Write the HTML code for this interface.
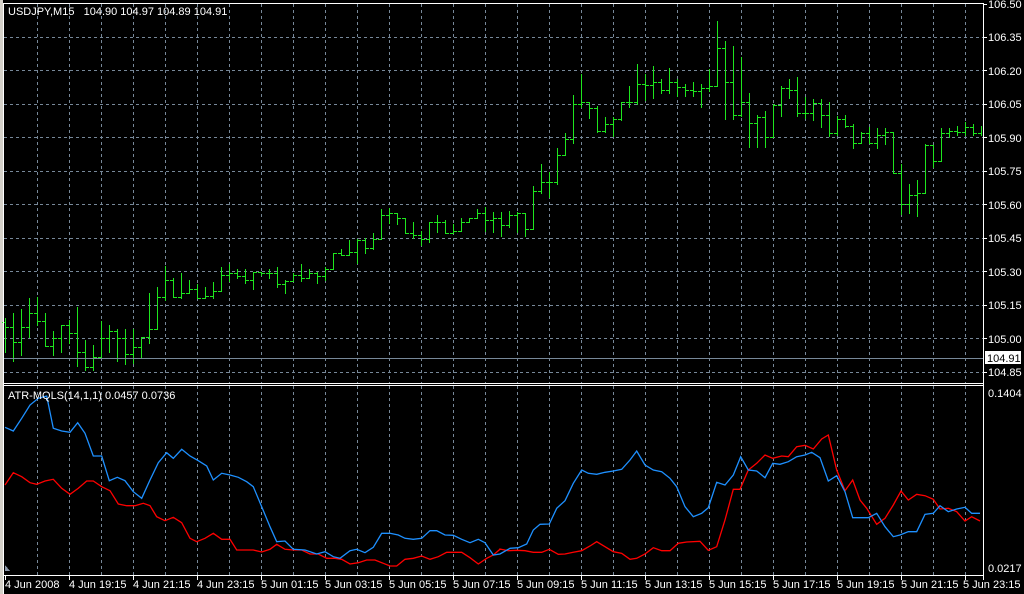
<!DOCTYPE html>
<html><head><meta charset="utf-8"><style>
html,body{margin:0;padding:0;background:#000;width:1024px;height:594px;overflow:hidden}
svg{display:block}
text{font-family:"Liberation Sans",sans-serif;font-size:11px;fill:#fff}
</style></head><body>
<svg id="c" width="1024" height="594" xmlns="http://www.w3.org/2000/svg" shape-rendering="crispEdges">
<rect x="0" y="0" width="1024" height="594" fill="#000"/>
<rect x="0" y="0" width="3" height="594" fill="#d4d0c8"/>
<g id="grid"></g>
<g id="bars"></g>
<line x1="4" y1="358.5" x2="983" y2="358.5" stroke="#778899"/>
<g id="lines" shape-rendering="auto"></g>
<line x1="3.5" y1="3" x2="3.5" y2="594" stroke="#fff"/>
<line x1="3" y1="3.5" x2="984" y2="3.5" stroke="#fff"/>
<line x1="983.5" y1="3" x2="983.5" y2="580" stroke="#fff"/>
<line x1="3" y1="383.5" x2="984" y2="383.5" stroke="#fff"/>
<line x1="3" y1="385.5" x2="984" y2="385.5" stroke="#fff"/>
<line x1="3" y1="575.5" x2="984" y2="575.5" stroke="#fff"/>
<polygon points="5,571 5,565 10,571" fill="#8a96a8"/>
<g id="ticks"></g>
<text x="8" y="15">USDJPY,M15&#160;&#160; 104.90&#160;104.97&#160;104.89&#160;104.91</text>
<text x="8" y="399">ATR-MQLS(14,1,1) 0.0457 0.0736</text>
<text x="988" y="8">106.50</text>
<text x="988" y="41">106.35</text>
<text x="988" y="75">106.20</text>
<text x="988" y="108">106.05</text>
<text x="988" y="142">105.90</text>
<text x="988" y="175">105.75</text>
<text x="988" y="209">105.60</text>
<text x="988" y="242">105.45</text>
<text x="988" y="276">105.30</text>
<text x="988" y="309">105.15</text>
<text x="988" y="343">105.00</text>
<text x="988" y="376">104.85</text>
<rect x="985" y="351" width="36" height="13" fill="#fff"/>
<text x="987" y="362" style="fill:#000">104.91</text>
<text x="988" y="397">0.1404</text>
<text x="988" y="572">0.0217</text>
<text x="5" y="588">4 Jun 2008</text>
<text x="69" y="588">4 Jun 19:15</text>
<text x="133" y="588">4 Jun 21:15</text>
<text x="197" y="588">4 Jun 23:15</text>
<text x="261" y="588">5 Jun 01:15</text>
<text x="325" y="588">5 Jun 03:15</text>
<text x="389" y="588">5 Jun 05:15</text>
<text x="453" y="588">5 Jun 07:15</text>
<text x="517" y="588">5 Jun 09:15</text>
<text x="581" y="588">5 Jun 11:15</text>
<text x="645" y="588">5 Jun 13:15</text>
<text x="709" y="588">5 Jun 15:15</text>
<text x="773" y="588">5 Jun 17:15</text>
<text x="837" y="588">5 Jun 19:15</text>
<text x="901" y="588">5 Jun 21:15</text>
<text x="963" y="588">5 Jun 23:15</text>
</svg>
<script>
var NS="http://www.w3.org/2000/svg";
function el(g,t,a){var e=document.createElementNS(NS,t);for(var k in a)e.setAttribute(k,a[k]);document.getElementById(g).appendChild(e);return e;}
for(var x=37;x<983;x+=32){el('grid','line',{x1:x+.5,y1:4,x2:x+.5,y2:383,stroke:'#778899','stroke-dasharray':'3,3'});
 el('grid','line',{x1:x+.5,y1:386,x2:x+.5,y2:575,stroke:'#778899','stroke-dasharray':'3,3'});}
var ys=[36.5,70,103.5,137,170.5,204,237.5,271,304.5,338,371.5];
ys.forEach(function(y){var yy=Math.round(y)+.5;el('grid','line',{x1:4,y1:yy,x2:983,y2:yy,stroke:'#778899','stroke-dasharray':'3,3'});
 el('ticks','line',{x1:983,y1:yy,x2:987,y2:yy,stroke:'#fff'});});
el('ticks','line',{x1:983,y1:4.5,x2:987,y2:4.5,stroke:'#fff'});
for(var x=5;x<983;x+=64){el('ticks','line',{x1:x+.5,y1:575,x2:x+.5,y2:580,stroke:'#fff'});}
var B=[[318,352,327],[313,361,342],[309,355,327],[298,337,313],[297,325,321],[313,346,346],[331,355,338],[325,352,325],[320,343,333],[307,366,352],[340,370,367],[345,370,357],[321,354,338],[325,352,331],[329,361,338],[329,364,354],[329,363,347],[338,357,337],[293,343,329],[287,317,297],[266,300,280],[278,297,297],[273,298,293],[280,293,289],[284,298,298],[287,298,296],[282,298,291],[267,291,275],[264,281,273],[269,278,276],[269,283,280],[272,289,272],[272,275,273],[269,278,273],[267,287,284],[280,293,281],[273,281,275],[264,281,278],[269,275,273],[272,283,276],[267,280,269],[253,267,253],[249,255,255],[240,255,252],[239,263,240],[238,253,248],[233,249,239],[209,239,215],[208,223,213],[214,224,218],[218,233,233],[222,238,235],[231,245,239],[222,242,222],[215,232,222],[220,233,233],[224,233,231],[218,226,222],[218,222,218],[209,216,213],[207,231,220],[212,232,218],[212,236,225],[211,227,215],[212,232,213],[213,236,229],[186,227,191],[164,193,182],[172,197,182],[148,184,155],[133,155,139],[95,143,104],[74,107,102],[104,118,108],[106,132,131],[117,132,124],[117,136,119],[102,120,102],[86,107,102],[64,104,84],[74,100,85],[66,98,82],[79,93,90],[68,93,82],[79,96,87],[84,96,90],[82,96,91],[84,107,88],[69,91,86],[21,83,48],[41,119,82],[46,119,115],[57,116,102],[93,147,123],[115,147,117],[111,147,137],[104,136,105],[86,116,88],[79,98,90],[77,116,113],[97,118,113],[99,120,103],[99,127,115],[102,136,133],[116,135,119],[115,127,126],[124,148,143],[132,143,133],[127,143,143],[128,148,135],[128,144,132],[139,173,173],[164,214,204],[184,213,195],[180,216,193],[144,193,145],[146,167,161],[128,157,133],[128,137,131],[126,135,132],[122,135,127],[124,135,133],[126,135,132]];
var G='#1ee61e';
B.forEach(function(b,i){var x=5+8*i;var o=i?B[i-1][2]:b[2]-5;
 var h=Math.min(b[0],o,b[2]),l=Math.max(b[1],o,b[2]);
 el('bars','rect',{x:x,y:h,width:1,height:l-h+1,fill:G});
 el('bars','rect',{x:x-3,y:o,width:3,height:1,fill:G});
 if(x+4<983)el('bars','rect',{x:x+1,y:b[2],width:3,height:1,fill:G});
});
function pts(a,ox){var s=[];for(var i=0;i<a.length;i+=2){s.push((a[i]/3+ox).toFixed(1)+','+(a[i+1]/3+380).toFixed(1));}return s;}
var b1=[15,142,40,153,65,115,90,75,115,55,140,48,160,145,185,153,210,157,233,128,255,160,280,228,305,228,328,302,352,292,375,302,400,335,425,355,450,300,475,248,500,218,520,235,545,208,570,228,595,242,620,258,640,300,665,280,690,285,715,292,740,305,760,320,785,380,810,440,830,485,855,483,880,508,915,510,950,522,975,515,1000,530,1020,535,1050,512,1070,508,1095,518,1120,502,1145,460,1170,460,1195,465,1215,475,1240,478,1265,475,1290,452,1310,452,1335,465,1360,466,1385,478,1410,488,1435,478,1455,488,1480,525,1500,522];
var r1=[15,315,40,278,65,290,90,308,110,313,135,303,160,298,185,325,210,343,235,325,260,303,280,303,305,320,330,332,355,372,380,377,405,377,430,370,450,377,470,410,495,422,520,412,545,428,570,475,590,485,615,475,640,460,665,478,690,478,710,510,760,510,785,516,810,508,830,493,855,508,880,510,905,510,930,522,955,522,980,535,1005,535,1025,538,1050,552,1075,548,1100,540,1125,540,1150,550,1170,558,1190,558,1215,538,1240,535,1265,528,1290,538,1315,530,1340,517,1385,517,1410,533,1435,552,1460,535,1480,525,1500,508];
var b2=[0,522,30,505,55,503,80,492,100,450,120,433,148,432,170,385,195,362,220,310,245,270,265,280,290,283,315,277,340,273,365,268,390,240,410,213,435,255,460,270,485,275,510,295,530,320,555,380,580,410,605,400,625,383,650,307,675,315,700,285,722,230,745,270,770,273,795,293,818,250,840,253,865,245,890,230,915,225,935,217,960,233,985,303,1010,287,1035,335,1058,413,1085,413,1105,413,1130,400,1155,440,1180,470,1200,465,1225,455,1250,455,1275,403,1300,400,1320,377,1345,395,1370,387,1395,382,1415,400,1440,400];
var r2=[0,507,25,512,50,511,75,512,100,517,125,517,148,508,175,523,195,522,220,517,245,512,270,498,290,485,315,500,340,515,365,520,390,538,410,535,435,522,460,503,485,512,510,512,535,490,560,486,600,484,625,511,650,500,675,420,700,328,720,328,745,270,770,250,795,225,818,235,845,228,865,230,890,200,915,196,940,207,965,177,985,165,1010,270,1035,332,1058,300,1080,360,1100,385,1130,433,1155,415,1180,375,1203,333,1225,360,1250,343,1275,347,1300,358,1320,387,1345,385,1370,395,1395,423,1415,410,1440,423];
el('lines','polyline',{points:pts(r1,0).concat(pts(r2,500)).join(' '),fill:'none',stroke:'#ff0000','stroke-width':1.3});
el('lines','polyline',{points:pts(b1,0).concat(pts(b2,500)).join(' '),fill:'none',stroke:'#1e90ff','stroke-width':1.3});
</script>
</body></html>
